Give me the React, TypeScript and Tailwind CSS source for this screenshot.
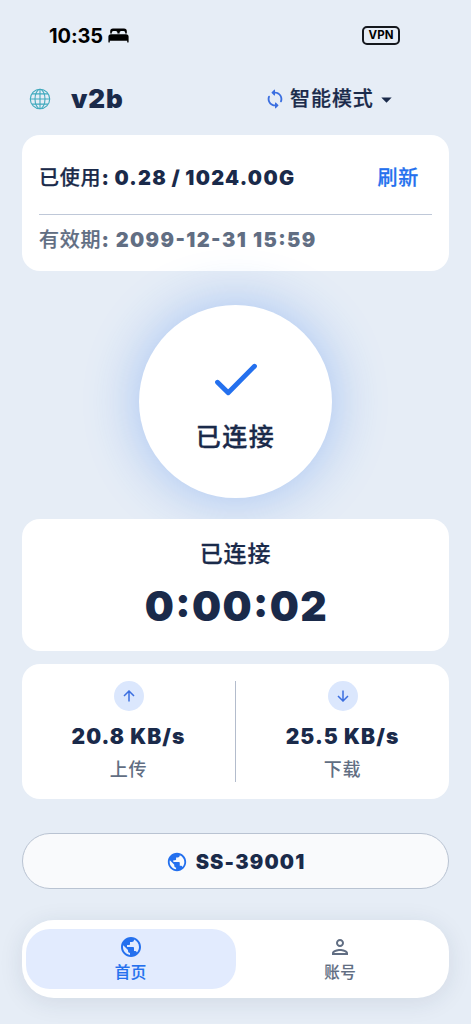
import React, { useState } from "react";
import { MdArrowDropDown, MdOutlinePerson, MdPublic } from "react-icons/md";

const StatusBar: React.FC = () => (
  <div className="flex h-[70px] items-center justify-between pl-[49px] pr-[71px] text-black">
    <div className="flex items-center gap-[5px]">
      <span className="pt-px text-[20px] leading-none font-bold tracking-[-0.1px]">
        10:35
      </span>
      <svg width="21" height="15" viewBox="0 0 21 15" fill="currentColor">
        <path d="M2.2 5.4V3.2Q2.2.4 5 .4h11Q18.8.4 18.8 3.2v2.2h-1.6V4.6q0-1.6-1.6-1.6h-2.4q-1.6 0-1.6 1.6v.8H9.4v-.8Q9.4 3 7.8 3H5.4Q3.8 3 3.8 4.6v.8z" />
        <path d="M3 6.2h15q2.6 0 2.6 2.6v5.1q0 .7-.7.7t-.7-.7v-1.2H1.8v1.2q0 .7-.7.7t-.7-.7V8.8Q.4 6.2 3 6.2z" />
      </svg>
    </div>
    <div className="flex h-[19px] w-[38px] items-center justify-center rounded-[5px] border-2 border-[#15181d] pt-px text-[11.5px] leading-none font-bold">
      VPN
    </div>
  </div>
);

const Header: React.FC = () => (
  <div className="flex h-[56px] items-center pt-[2px] pl-[29px]">
    <svg
      width="22"
      height="22"
      viewBox="0 0 22 22"
      fill="none"
      stroke="#3fa9bd"
      strokeWidth="1.1"
    >
      <circle cx="11" cy="11" r="9.7" />
      <ellipse cx="11" cy="11" rx="5" ry="9.7" />
      <path d="M11 1.3v19.4M1.3 11h19.4M3 5.9h16M3 16.1h16" />
    </svg>
    <h1 className="ml-5 w-[193px] text-[26px] leading-none font-black tracking-[0.9px]">
      v2b
    </h1>
    <button className="flex items-center text-[20px] leading-none font-medium tracking-[0.8px]">
      <svg width="22" height="22" viewBox="0 0 24 24" fill="#3b6fe0">
        <path d="M12 4V2.21c0-.45-.54-.67-.85-.35l-2.8 2.79c-.2.2-.2.51 0 .71l2.79 2.79c.32.31.86.09.86-.36V6c3.31 0 6 2.69 6 6 0 .79-.15 1.56-.44 2.25-.15.36-.04.77.23 1.04.51.51 1.37.33 1.64-.34.37-.91.57-1.91.57-2.95 0-4.42-3.58-8-8-8zm0 14c-3.31 0-6-2.69-6-6 0-.79.15-1.56.44-2.25.15-.36.04-.77-.23-1.04-.51-.51-1.37-.33-1.64.34C4.2 9.96 4 10.96 4 12c0 4.42 3.58 8 8 8v1.79c0 .45.54.67.85.35l2.79-2.79c.2-.2.2-.51 0-.71l-2.79-2.79c-.31-.31-.85-.09-.85.36V18z" />
      </svg>
      <span className="ml-[4px] tracking-[0.95px] [-webkit-text-stroke:0.25px]">
        智能模式
      </span>
      <MdArrowDropDown className="text-[25px]" />
    </button>
  </div>
);

const UsageCard: React.FC = () => (
  <div className="mt-[9px] h-[136px] rounded-[18px] bg-white px-[17px]">
    <div className="flex h-[80px] items-center justify-between border-b border-[#bfc8d8] pt-[7px] pr-[13px] text-[20px] font-medium tracking-[0.8px]">
      <div className="flex">
        <span className="[-webkit-text-stroke:0.25px]">已使用</span>
        <b className="font-black tracking-[1.3px] [word-spacing:-1px]">
          : 0.28 / 1024.00G
        </b>
      </div>
      <button className="text-[#2470ee] [-webkit-text-stroke:0.25px]">
        刷新
      </button>
    </div>
    <div className="flex h-[50px] items-center text-[20px] font-medium tracking-[0.8px] text-[#616e83]">
      <span className="[-webkit-text-stroke:0.2px]">有效期</span>
      <b className="font-black tracking-[1.4px]">
        :{" "}
        <span className="[font-feature-settings:'case'] [word-spacing:0.5px]">
          2099-12-31 15:59
        </span>
      </b>
    </div>
  </div>
);

const ConnectButton: React.FC = () => (
  <button className="mx-auto mt-[34px] flex h-[193px] w-[193px] flex-col items-center rounded-full bg-white pt-[58px] shadow-[0_0_54px_2px_rgba(36,112,238,0.33)]">
    <svg
      width="44"
      height="34"
      viewBox="0 0 44 34"
      fill="none"
      stroke="#2470ee"
      strokeWidth="4.8"
      strokeLinecap="round"
      strokeLinejoin="round"
    >
      <path d="M3.5 19.2 14.2 29.8 40.5 3.2" />
    </svg>
    <span className="mt-[22px] text-[25px] leading-[36px] font-medium tracking-[1.5px] [-webkit-text-stroke:0.35px]">
      已连接
    </span>
  </button>
);

const TimerCard: React.FC = () => (
  <div className="mt-[21px] flex h-[132px] flex-col items-center rounded-[18px] bg-white pt-[19px]">
    <span className="text-[23px] leading-[32px] font-medium tracking-[0.8px] [-webkit-text-stroke:0.25px]">
      已连接
    </span>
    <span className="mt-[11px] pl-[2px] text-[41px] leading-[50px] font-black tracking-[1.4px] [font-feature-settings:'case']">
      0:00:02
    </span>
  </div>
);

interface SpeedProps {
  value: string;
  label: string;
  arrow: string;
}

const Speed: React.FC<SpeedProps> = ({ value, label, arrow }) => (
  <div className="flex flex-1 flex-col items-center">
    <div className="flex h-[30px] w-[30px] items-center justify-center rounded-full bg-[#dbe7fd]">
      <svg
        width="12"
        height="12"
        viewBox="0 0 12 12"
        fill="none"
        stroke="#3b6fe0"
        strokeWidth="1.5"
      >
        <path d={arrow} />
      </svg>
    </div>
    <span className="mt-[10px] text-[21px] leading-[32px] font-black tracking-[1.05px]">
      {value}
    </span>
    <span className="text-[18px] leading-[34px] font-medium tracking-[0.8px] text-[#616e83]">
      {label}
    </span>
  </div>
);

const SpeedCard: React.FC = () => (
  <div className="mt-[13px] flex h-[135px] rounded-[18px] bg-white pt-[17px]">
    <Speed
      value="20.8 KB/s"
      label="上传"
      arrow="M6 11.5V1M1 6l5-5 5 5"
    />
    <div className="h-[101px] w-px bg-[#b3bccc]" />
    <Speed
      value="25.5 KB/s"
      label="下载"
      arrow="M6 .5V11M1 6l5 5 5-5"
    />
  </div>
);

const tabs = [
  { key: "home", label: "首页", icon: <MdPublic className="text-[24px]" /> },
  {
    key: "account",
    label: "账号",
    icon: <MdOutlinePerson className="text-[24px]" />,
  },
];

export default function App() {
  const [tab, setTab] = useState("home");

  return (
    <div className="h-[1024px] w-[471px] overflow-hidden bg-[#e6edf6] font-['Inter','Noto_Sans_CJK_SC',sans-serif] text-[#1a2a4a]">
      <StatusBar />
      <Header />
      <div className="flex flex-col px-[22px]">
        <UsageCard />
        <ConnectButton />
        <TimerCard />
        <SpeedCard />
        <button className="mt-[34px] flex h-[56px] items-center justify-center gap-[8px] rounded-full border border-[#b9c3d2] bg-[#f9fafc] pt-px text-[20px] font-black tracking-[1.15px]">
          <MdPublic className="text-[22px] text-[#2470ee]" />
          SS-39001
        </button>
        <nav className="mt-[31px] flex h-[78px] rounded-[32px] bg-white px-[4px] py-[9px] shadow-[0_4px_24px_rgba(30,50,80,0.1)]">
          {tabs.map((item) => (
            <button
              key={item.key}
              onClick={() => setTab(item.key)}
              className={`flex flex-1 flex-col items-center rounded-[24px] pt-[6px] ${
                tab === item.key
                  ? "bg-[#e2ebfe] text-[#2470ee]"
                  : "text-[#616e83]"
              }`}
            >
              {item.icon}
              <span className="mt-px text-[15.5px] leading-[26px] font-medium tracking-[0.5px] [-webkit-text-stroke:0.15px]">
                {item.label}
              </span>
            </button>
          ))}
        </nav>
      </div>
    </div>
  );
}
